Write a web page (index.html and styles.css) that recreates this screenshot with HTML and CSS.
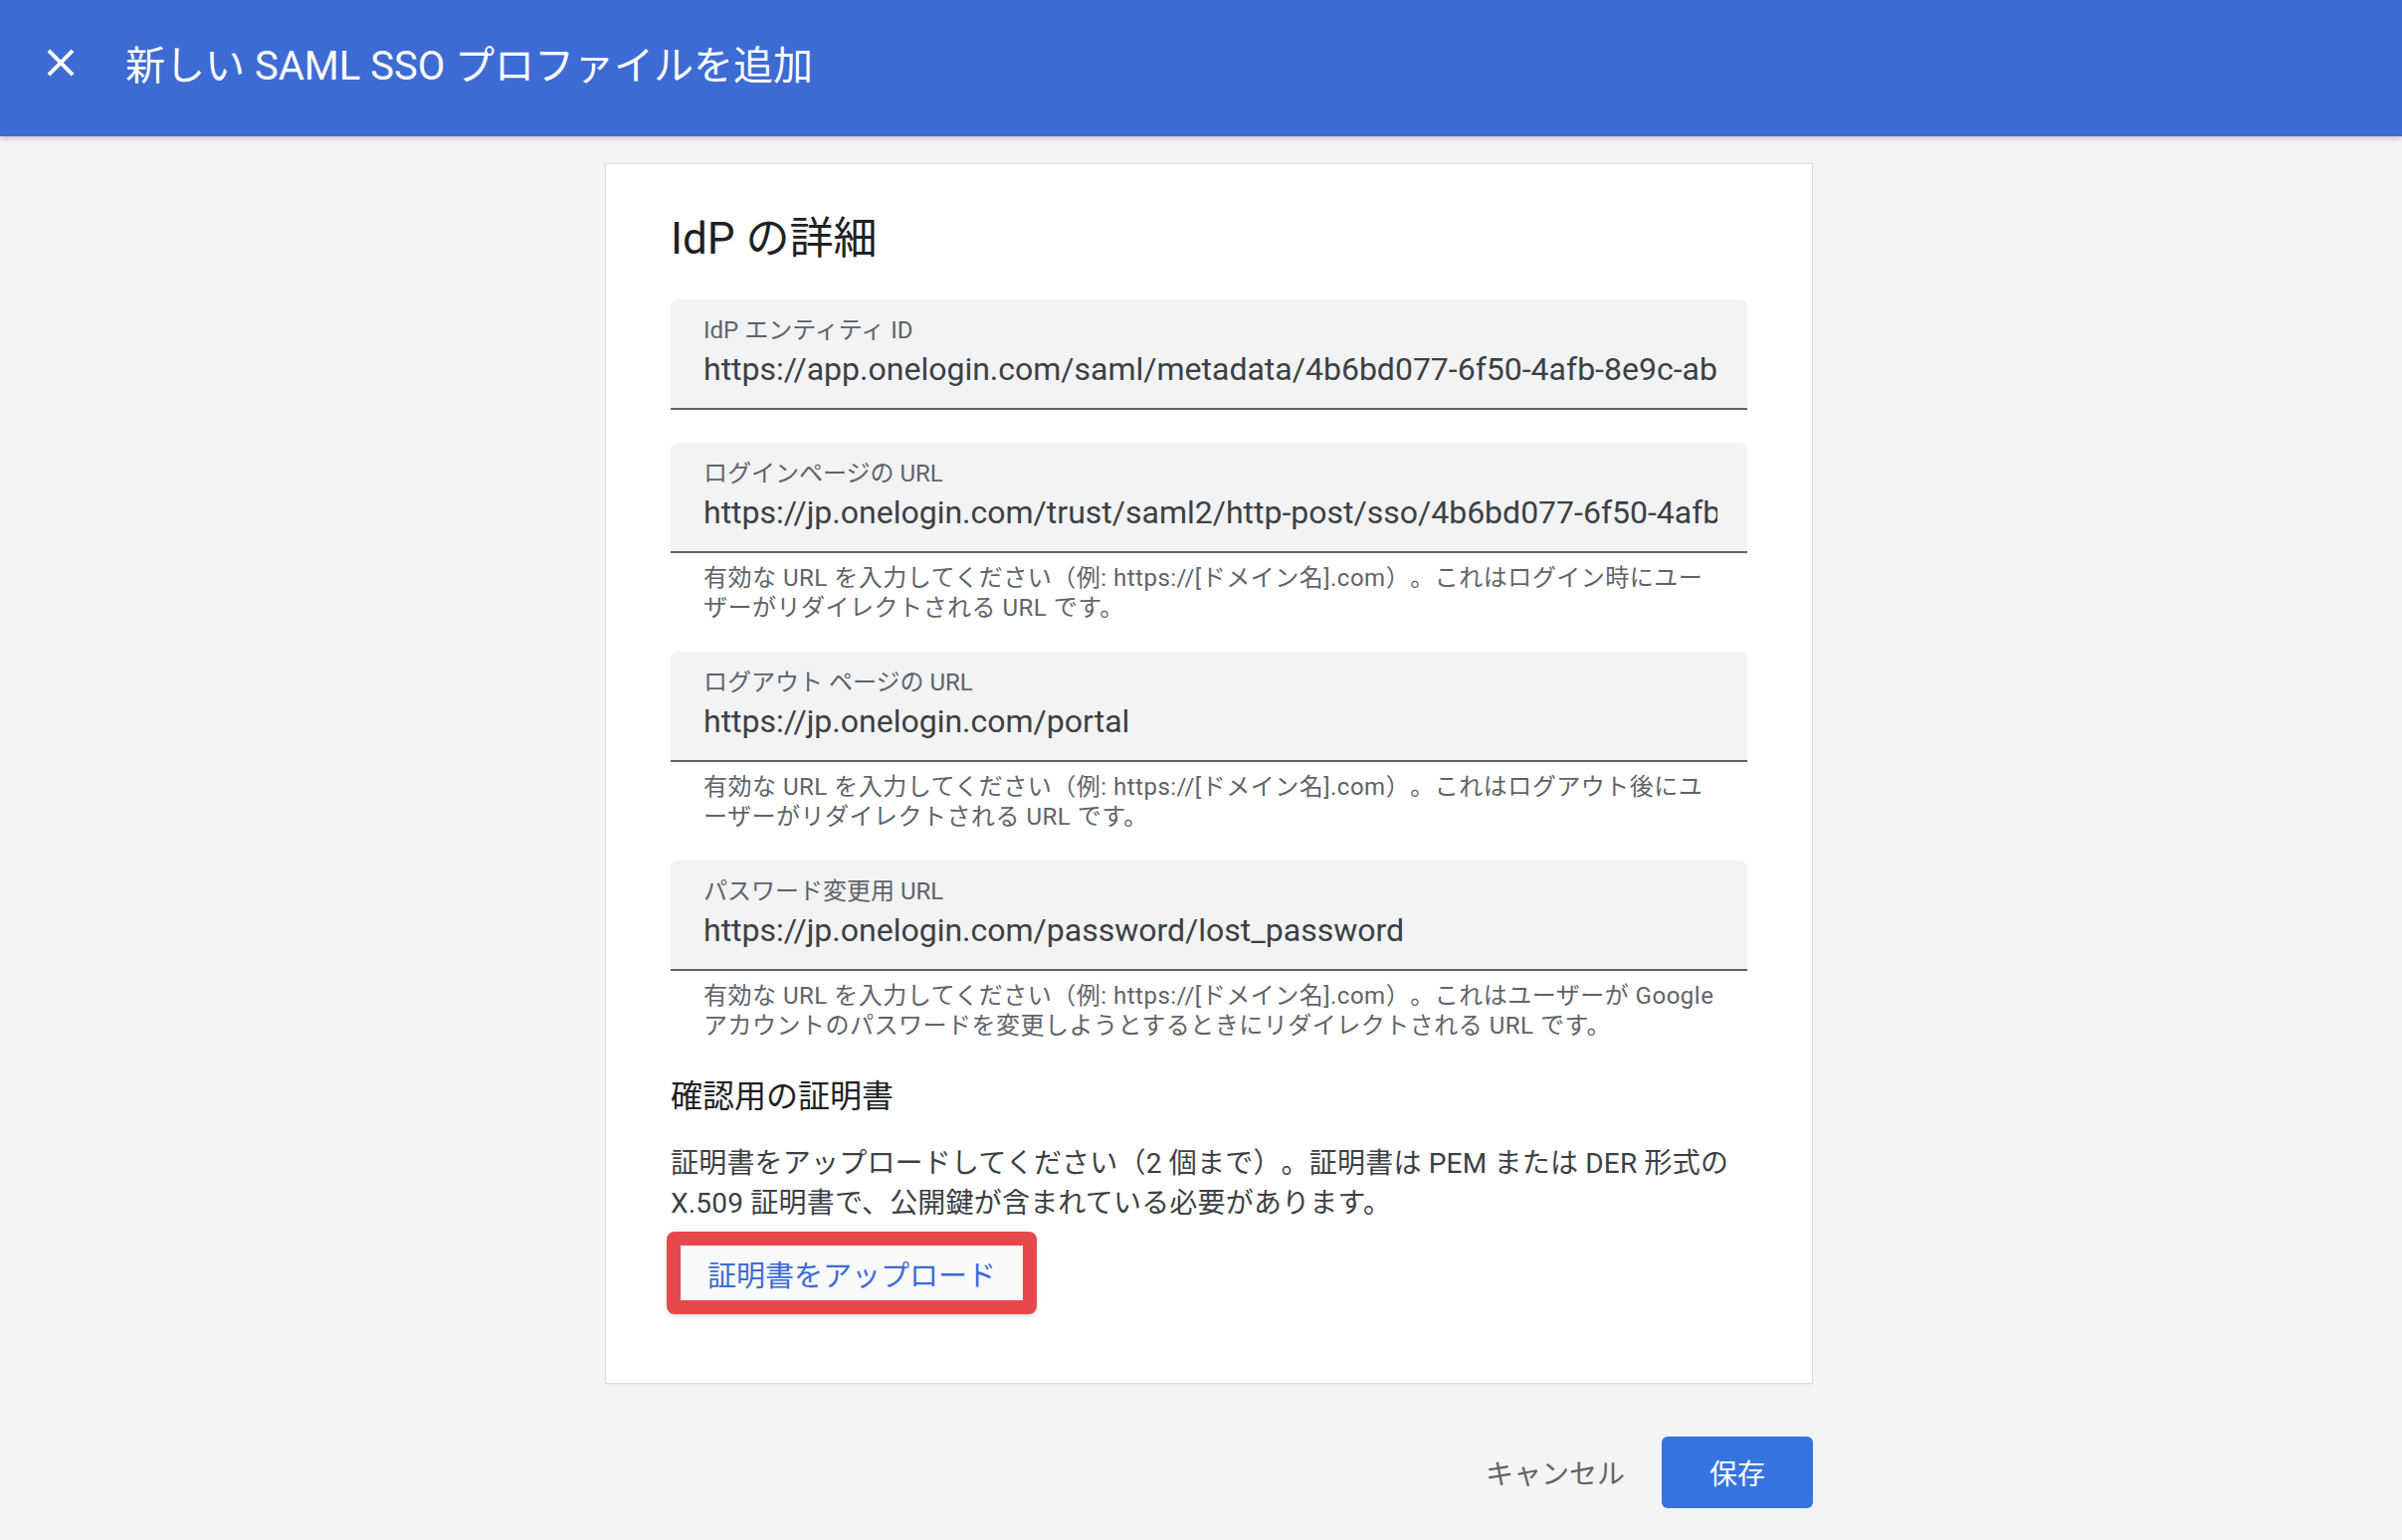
FILE: index.html
```html
<!DOCTYPE html>
<html lang="ja">
<head>
<meta charset="UTF-8">
<meta name="viewport" content="width=device-width, initial-scale=1.0">
<title>新しい SAML SSO プロファイルを追加</title>
<link rel="stylesheet" href="styles.css">
</head>
<body>

<!-- Top bar -->
<header class="app-bar">
    <button class="close-btn" type="button" aria-label="閉じる">
        <svg viewBox="0 0 24 24" width="46" height="46"><path fill="#fff" d="M19 6.41L17.59 5 12 10.59 6.41 5 5 6.41 10.59 12 5 17.59 6.41 19 12 13.41 17.59 19 19 17.59 13.41 12z"/></svg>
    </button>
    <h1 class="app-bar-title">新しい SAML SSO プロファイルを追加</h1>
</header>

<main class="page">
    <section class="card">
        <h2 class="card-title">IdP の詳細</h2>

        <div class="form-row form-row-plain">
            <div class="field">
                <div class="field-label">IdP エンティティ ID</div>
                <div class="field-value">https://app.onelogin.com/saml/metadata/4b6bd077-6f50-4afb-8e9c-ab12cd34ef56</div>
            </div>
        </div>

        <div class="form-row">
            <div class="field">
                <div class="field-label">ログインページの URL</div>
                <div class="field-value">https://jp.onelogin.com/trust/saml2/http-post/sso/4b6bd077-6f50-4afb-8e9c-ab12cd34ef56</div>
            </div>
            <p class="field-hint">有効な URL を入力してください（例: https://[ドメイン名].com）。これはログイン時にユーザーがリダイレクトされる URL です。</p>
        </div>

        <div class="form-row">
            <div class="field">
                <div class="field-label">ログアウト ページの URL</div>
                <div class="field-value">https://jp.onelogin.com/portal</div>
            </div>
            <p class="field-hint">有効な URL を入力してください（例: https://[ドメイン名].com）。これはログアウト後にユーザーがリダイレクトされる URL です。</p>
        </div>

        <div class="form-row">
            <div class="field">
                <div class="field-label">パスワード変更用 URL</div>
                <div class="field-value">https://jp.onelogin.com/password/lost_password</div>
            </div>
            <p class="field-hint">有効な URL を入力してください（例: https://[ドメイン名].com）。これはユーザーが Google アカウントのパスワードを変更しようとするときにリダイレクトされる URL です。</p>
        </div>

        <h3 class="section-title">確認用の証明書</h3>
        <p class="section-text">証明書をアップロードしてください（2 個まで）。証明書は PEM または DER 形式の X.509 証明書で、公開鍵が含まれている必要があります。</p>

        <div class="highlight">
            <button class="upload-btn" type="button">証明書をアップロード</button>
        </div>
    </section>

    <div class="actions">
        <button class="btn-cancel" type="button">キャンセル</button>
        <button class="btn-save" type="button">保存</button>
    </div>
</main>

</body>
</html>
```

FILE: styles.css
```css
/* Base */
body {
    margin: 0;
    padding: 0;
    background-color: #f4f4f4;
    font-family: Roboto, "Noto Sans CJK JP", sans-serif;
    color: #3c4043;
    text-spacing-trim: space-all;
}

button {
    font-family: inherit;
    cursor: pointer;
}

/* Top bar */
.app-bar {
    height: 137px;
    box-sizing: border-box;
    display: flex;
    align-items: center;
    padding: 0 0 12px 38px;
    background-color: #3e6bd3;
    color: #ffffff;
    box-shadow: 0 2px 6px rgba(0, 0, 0, 0.22);
}

.close-btn {
    display: flex;
    padding: 0;
    border: none;
    background: none;
}

.app-bar-title {
    margin: 0 0 0 42px;
    font-size: 40px;
    font-weight: 400;
}

/* Page */
.page {
    display: flex;
    flex-direction: column;
    align-items: center;
    padding: 27px 0 40px 16px;
}

.card {
    width: 1214px;
    box-sizing: border-box;
    display: flex;
    flex-direction: column;
    padding: 47px 65px 69px;
    background: #ffffff;
    border: 1px solid #dadce0;
    box-shadow: 0 1px 2px rgba(0, 0, 0, 0.06);
}

.card-title {
    margin: 2px 0 35px;
    font-size: 44px;
    line-height: 52px;
    font-weight: 400;
    color: #202124;
}

/* Text fields */
.form-row {
    margin-bottom: 29px;
}

.form-row-plain {
    margin-bottom: 33px;
}

.field {
    padding: 17px 30px 19px 33px;
    background: #f1f3f4;
    border-radius: 8px 8px 0 0;
    border-bottom: 2px solid #5f6368;
}

.field-label {
    margin-bottom: 5px;
    font-size: 24px;
    line-height: 28px;
    color: #5f6368;
}

.field-value {
    font-size: 32px;
    line-height: 40px;
    color: #3c4043;
    white-space: nowrap;
    overflow: hidden;
}

.field-hint {
    margin: 0;
    padding: 10px 30px 0 33px;
    font-size: 24px;
    line-height: 30px;
    letter-spacing: 0.5px;
    color: #5f6368;
}

/* Certificate section */
.section-title {
    margin: 7px 0 28px;
    font-size: 32px;
    line-height: 40px;
    font-weight: 400;
    color: #202124;
}

.section-text {
    margin: 0 0 8px;
    font-size: 28px;
    line-height: 40px;
    letter-spacing: 0.2px;
    color: #3c4043;
}

.highlight {
    align-self: flex-start;
    margin-left: -4px;
    border: 14px solid #e5484b;
    border-radius: 8px;
    box-shadow: 0 2px 4px rgba(0, 0, 0, 0.15);
}

.upload-btn {
    display: block;
    height: 55px;
    padding: 0 27px;
    border: none;
    background: #f8f9fa;
    font-size: 29px;
    color: #3d6bd6;
}

/* Footer buttons */
.actions {
    width: 1214px;
    display: flex;
    justify-content: flex-end;
    align-items: center;
    margin-top: 53px;
}

.btn-cancel {
    margin-right: 17px;
    padding: 0 20px;
    border: none;
    background: none;
    font-size: 28px;
    color: #5f6368;
}

.btn-save {
    width: 152px;
    height: 72px;
    border: none;
    border-radius: 6px;
    background: #3574e0;
    font-size: 28px;
    color: #ffffff;
}
```
